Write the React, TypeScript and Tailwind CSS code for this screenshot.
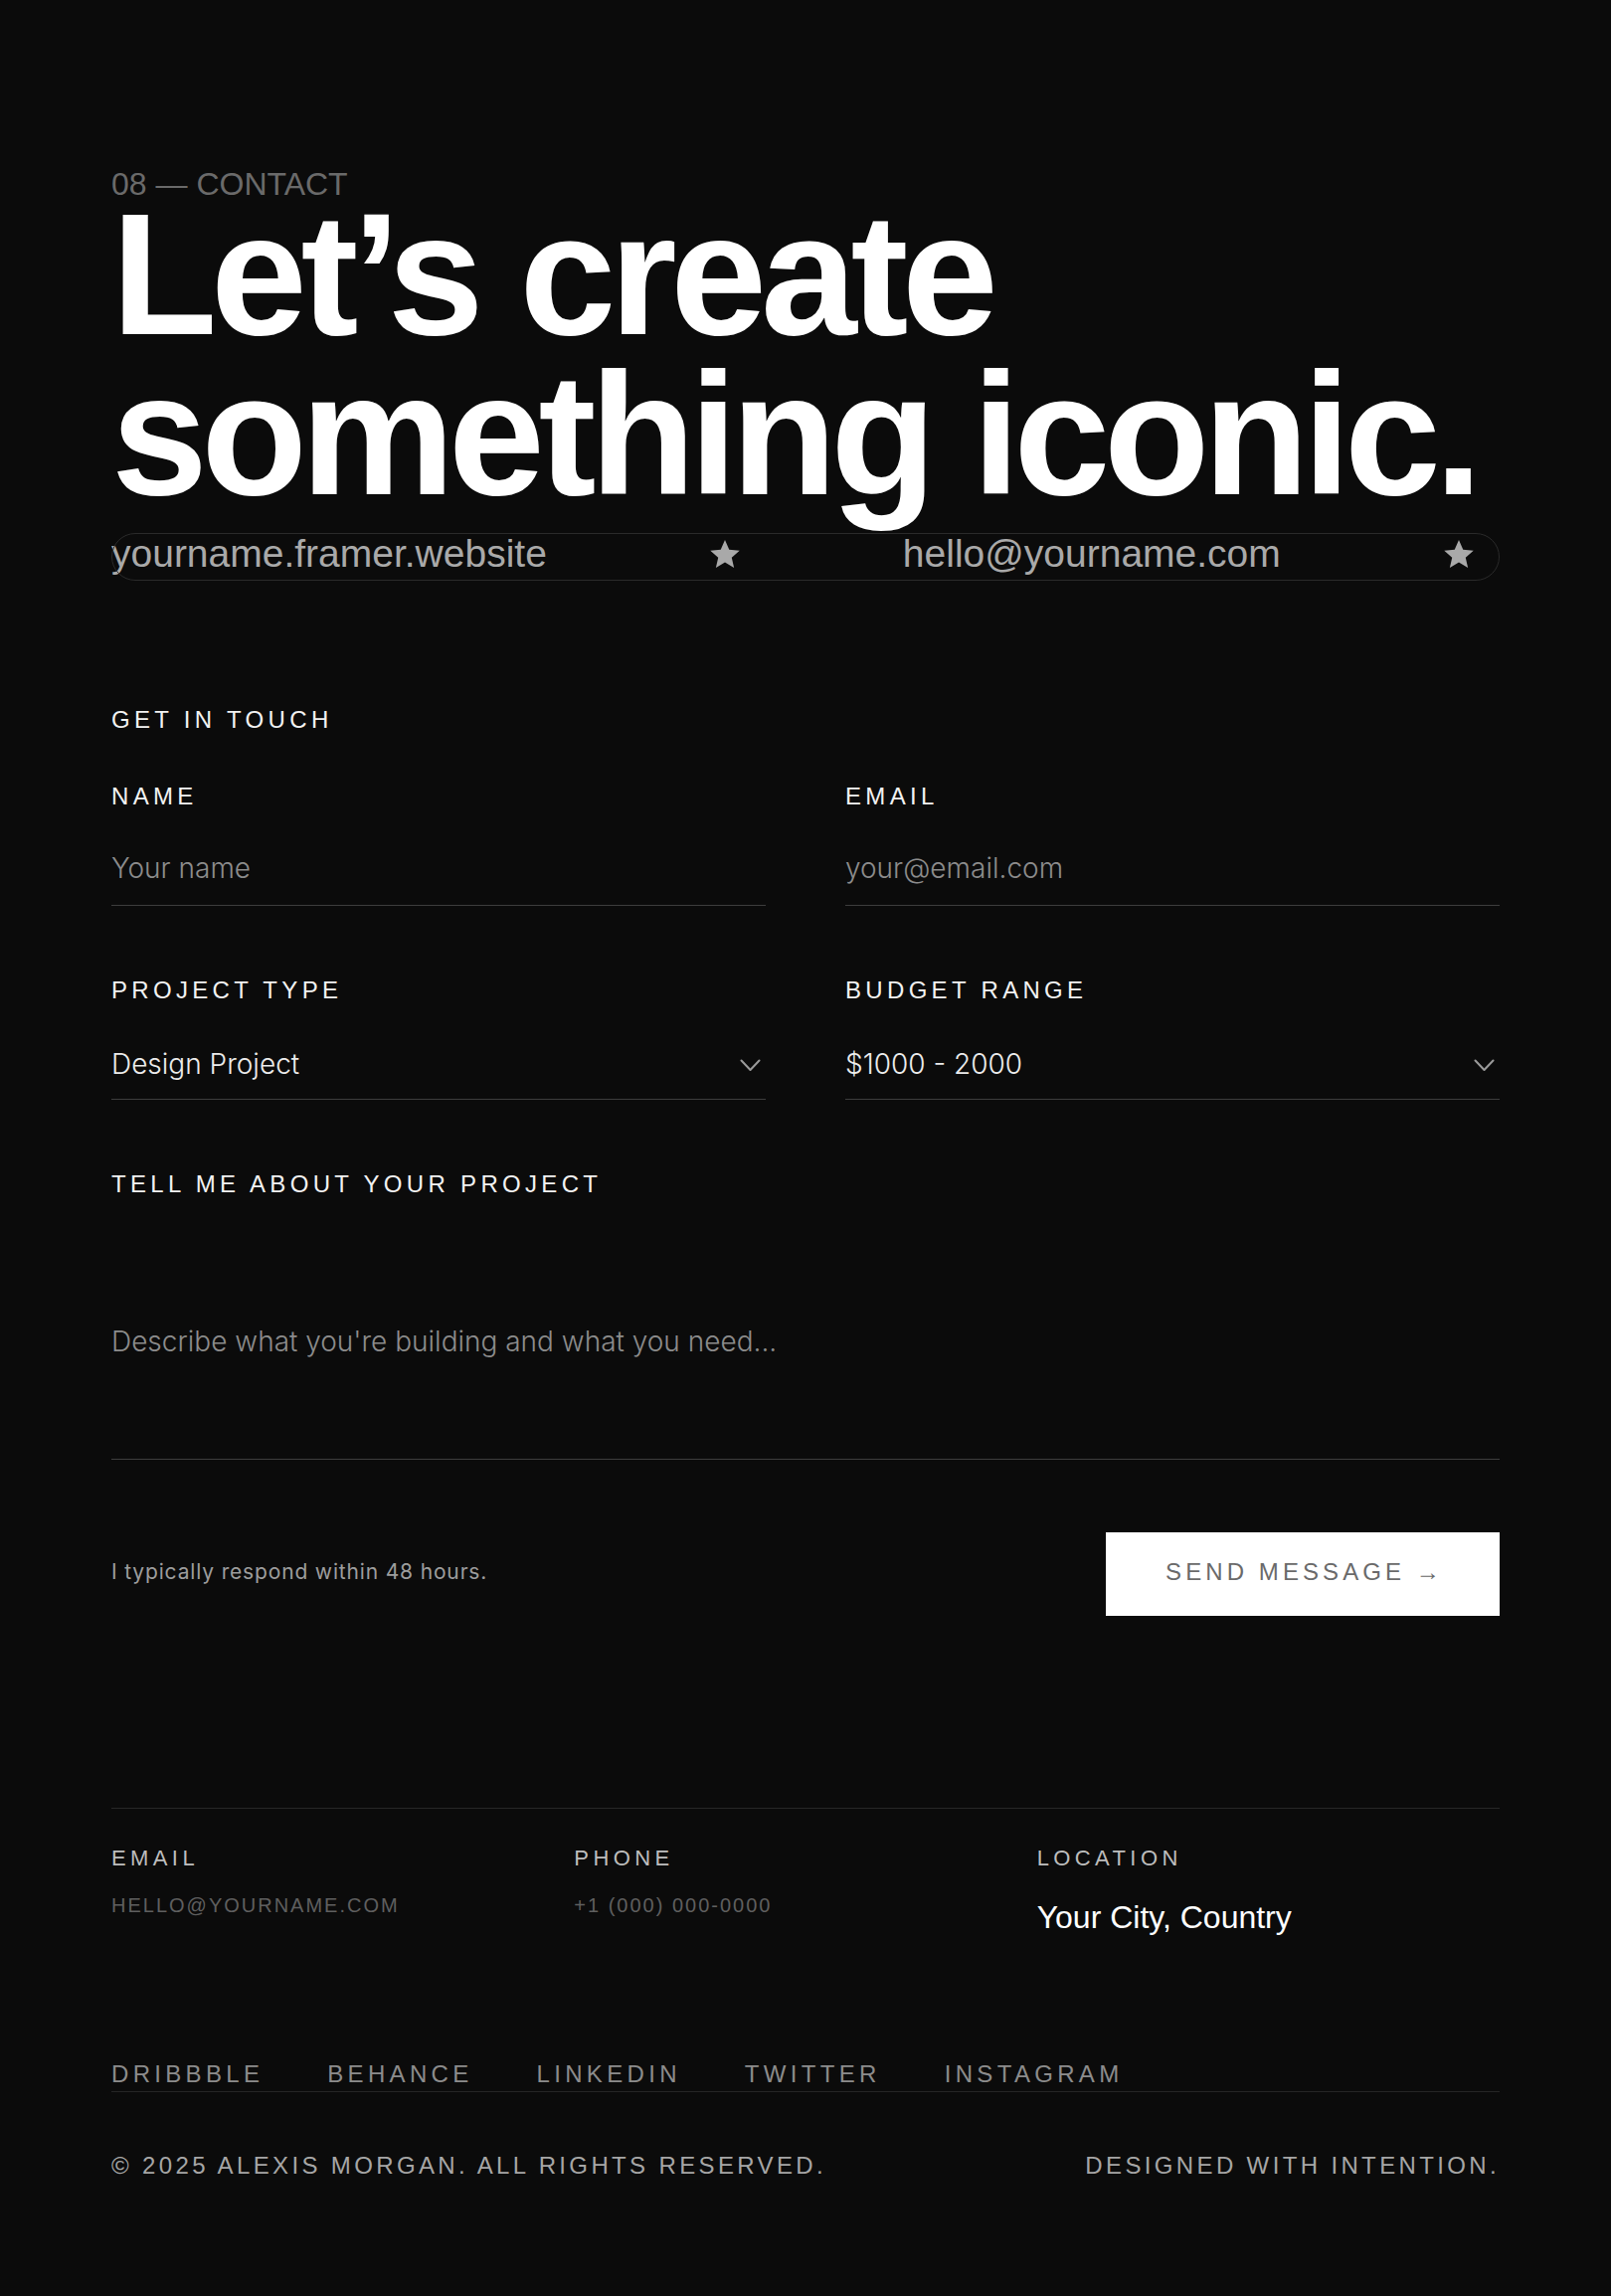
const helv = "font-['Liberation_Sans',Arial,sans-serif]";
const inter = "font-['Inter',sans-serif]";

const socials = ["Dribbble", "Behance", "LinkedIn", "Twitter", "Instagram"];

function Star() {
  return (
    <svg
      width="30"
      height="28"
      viewBox="2 2 20 19"
      className="shrink-0"
      fill="#a9a9a9"
    >
      <polygon points="12,2 14.9,8.6 22,9.3 16.6,14 18.2,21 12,17.3 5.8,21 7.4,14 2,9.3 9.1,8.6" />
    </svg>
  );
}

function Label({ children }: { children: React.ReactNode }) {
  return (
    <p
      className={`${helv} text-[24px] leading-[28px] tracking-[0.18em] uppercase text-[#f2f2f2]`}
    >
      {children}
    </p>
  );
}

function Field({ label, placeholder }: { label: string; placeholder: string }) {
  return (
    <div>
      <Label>{label}</Label>
      <input
        placeholder={placeholder}
        className={`${inter} mt-[38px] block w-full h-[58px] pb-[17px] bg-transparent border-b border-[#3d3d3d] text-[28px] font-light text-white placeholder:text-[#8c8c8c] outline-none`}
      />
    </div>
  );
}

function SelectField({ label, value }: { label: string; value: string }) {
  return (
    <div>
      <Label>{label}</Label>
      <div className="mt-[38px] flex items-start justify-between h-[58px] pt-[2px] border-b border-[#3d3d3d]">
        <span className={`${inter} text-[28px] leading-[40px] font-light text-[#ececec]`}>
          {value}
        </span>
        <div className="h-[40px] flex items-center pr-[5px] pt-[2px]">
          <svg width="21" height="12" viewBox="0 0 21 12" fill="none">
            <path
              d="M1.5 1.5l9 9.5 9-9.5"
              stroke="#9a9a9a"
              strokeWidth="2"
              strokeLinecap="round"
              strokeLinejoin="round"
            />
          </svg>
        </div>
      </div>
    </div>
  );
}

function Marquee() {
  const items = [
    "yourname.framer.website",
    "hello@yourname.com",
    "yourname.framer.website",
  ];
  return (
    <div className="relative mt-[19px] h-12 overflow-hidden">
      <div className="absolute inset-0 rounded-full border border-[#2a2a2a]" />
      <div className="flex items-center gap-[164px] h-[36px] mt-[3px] whitespace-nowrap">
        {items.map((t, i) => (
          <div key={i} className="flex items-center gap-[164px] shrink-0">
            <span className={`${helv} text-[39px] leading-[36px] text-[#a9a9a9]`}>{t}</span>
            <Star />
          </div>
        ))}
      </div>
    </div>
  );
}

export default function App() {
  return (
    <div className="min-h-[2309px] bg-[#0b0b0b] overflow-hidden">
      <section className="px-[112px] pt-[167px] pb-[117px]">
        <p className={`${helv} text-[32px] leading-[36px] text-[#6a6a6a]`}>
          08 — CONTACT
        </p>
        <h1
          className={`${helv} -mt-[8px] text-[174px] leading-[161px] font-bold tracking-[-0.036em] text-white`}
        >
          Let’s create
          <br />
          something iconic.
        </h1>

        <Marquee />

        <div className="mt-[126px]">
          <Label>Get in touch</Label>
        </div>

        <div className="mt-[49px] grid grid-cols-2 gap-x-20 gap-y-[71px]">
          <Field label="Name" placeholder="Your name" />
          <Field label="Email" placeholder="your@email.com" />
          <SelectField label="Project type" value="Design Project" />
          <SelectField label="Budget range" value="$1000 - 2000" />
        </div>

        <div className="mt-[71px]">
          <Label>Tell me about your project</Label>
          <textarea
            placeholder="Describe what you're building and what you need..."
            className={`${inter} mt-[38px] block w-full h-[225px] pt-[86px] resize-none bg-transparent border-b border-[#3d3d3d] text-[28px] leading-[40px] font-light text-white placeholder:text-[#8c8c8c] outline-none`}
          />
        </div>

        <div className="mt-[73px] flex items-center justify-between">
          <p className={`${inter} pb-[4px] text-[21px] tracking-[0.04em] text-[#9d9d9d]`}>
            I typically respond within 48 hours.
          </p>
          <button
            className={`${helv} w-[396px] h-[84px] bg-white flex items-center justify-center pl-[4px] pb-[4px] text-[24px] tracking-[0.17em] text-[#6a6a6a]`}
          >
            SEND MESSAGE →
          </button>
        </div>

        <div className="mt-[193px] border-t border-[#262626] pt-[36px] grid grid-cols-3">
          <div>
            <p className={`${helv} text-[22px] leading-[28px] tracking-[0.2em] text-[#bdbdbd]`}>
              EMAIL
            </p>
            <p className={`${helv} mt-[21px] text-[20px] leading-[24px] tracking-[0.1em] text-[#5f5f5f]`}>
              HELLO@YOURNAME.COM
            </p>
          </div>
          <div>
            <p className={`${helv} text-[22px] leading-[28px] tracking-[0.2em] text-[#bdbdbd]`}>
              PHONE
            </p>
            <p className={`${helv} mt-[21px] text-[20px] leading-[24px] tracking-[0.1em] text-[#5f5f5f]`}>
              +1 (000) 000-0000
            </p>
          </div>
          <div>
            <p className={`${helv} text-[22px] leading-[28px] tracking-[0.2em] text-[#bdbdbd]`}>
              LOCATION
            </p>
            <p className={`${helv} mt-[27px] text-[32px] leading-[36px] text-white`}>
              Your City, Country
            </p>
          </div>
        </div>

        <div className="mt-[126px] pb-[3px] border-b border-[#262626] flex gap-[64px]">
          {socials.map((s) => (
            <a
              key={s}
              href="#"
              className={`${helv} text-[24px] leading-[28px] tracking-[0.18em] uppercase text-[#8c8c8c]`}
            >
              {s}
            </a>
          ))}
        </div>

        <div className={`${helv} mt-[60px] flex justify-between text-[24px] leading-[28px] tracking-[0.14em] text-[#a6a6a6]`}>
          <p>© 2025 ALEXIS MORGAN. ALL RIGHTS RESERVED.</p>
          <p>DESIGNED WITH INTENTION.</p>
        </div>
      </section>
    </div>
  );
}
